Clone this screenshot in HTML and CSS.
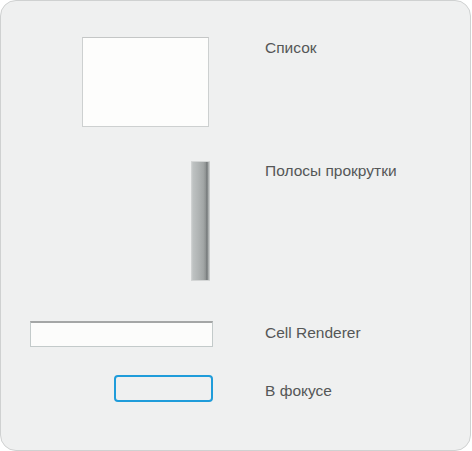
FILE: index.html
```html
<!DOCTYPE html>
<html lang="ru">
<head>
<meta charset="utf-8">
<title>Виджеты</title>
<link rel="stylesheet" href="styles.css">
</head>
<body>
<div class="panel">
  <div class="row row-top r1">
    <div class="cell"><div class="listbox"></div></div>
    <div class="label">Список</div>
  </div>
  <div class="row row-top r2">
    <div class="cell"><div class="scrollbar"></div></div>
    <div class="label">Полосы прокрутки</div>
  </div>
  <div class="row row-mid r3">
    <div class="cell"><div class="renderer"></div></div>
    <div class="label">Cell Renderer</div>
  </div>
  <div class="row row-mid r4">
    <div class="cell"><div class="focus"></div></div>
    <div class="label">В фокусе</div>
  </div>
</div>
</body>
</html>
```
FILE: styles.css
```css
html, body {
  margin: 0;
  padding: 0;
  background: #ffffff;
}
.panel {
  box-sizing: border-box;
  width: 471px;
  height: 451px;
  border: 1px solid #cfd1d1;
  border-radius: 16px;
  background: #eff0f0;
  padding-top: 36px;
  font-family: "Liberation Sans", Arial, sans-serif;
  font-size: 15.5px;
  color: #555757;
}
.row {
  display: grid;
  grid-template-columns: 212px 1fr;
  column-gap: 52px;
}
.row-top { align-items: start; }
.row-mid { align-items: center; }
.cell {
  display: flex;
  justify-content: flex-end;
}
.label {
  line-height: 18px;
  white-space: nowrap;
}
.r1 .label { padding-top: 2px; }
.r2 { margin-top: 34px; }
.r2 .label { padding-top: 1px; }
.r3 { margin-top: 40px; }
.r3 .label { margin-top: -2px; }
.r4 { margin-top: 28px; }
.r4 .label { margin-top: 5px; }

.listbox {
  box-sizing: border-box;
  width: 127px;
  height: 90px;
  margin-right: 4px;
  background: #fdfdfc;
  border: 1px solid #cdd0d0;
  border-top-color: #c4c6c6;
}
.scrollbar {
  box-sizing: border-box;
  width: 19px;
  height: 120px;
  margin-right: 3px;
  border-top: 1px solid #d4d6d6;
  border-bottom: 1px solid #d4d6d6;
  background: linear-gradient(to right,
    #d6d8d8 0,
    #bec2c2 10%,
    #b0b4b4 40%,
    #a2a6a6 65%,
    #8e9292 78%,
    #6f7375 84%,
    #9ea2a2 90%,
    #d6d8d8 100%);
}
.renderer {
  box-sizing: border-box;
  width: 183px;
  height: 26px;
  background: #fcfcfb;
  border: 1px solid #c3caca;
  border-top: 2px solid #a4a6a6;
}
.focus {
  box-sizing: border-box;
  width: 99px;
  height: 27px;
  border: 2px solid #1f9cda;
  border-radius: 4px;
  background: #eff0f0;
}
```
